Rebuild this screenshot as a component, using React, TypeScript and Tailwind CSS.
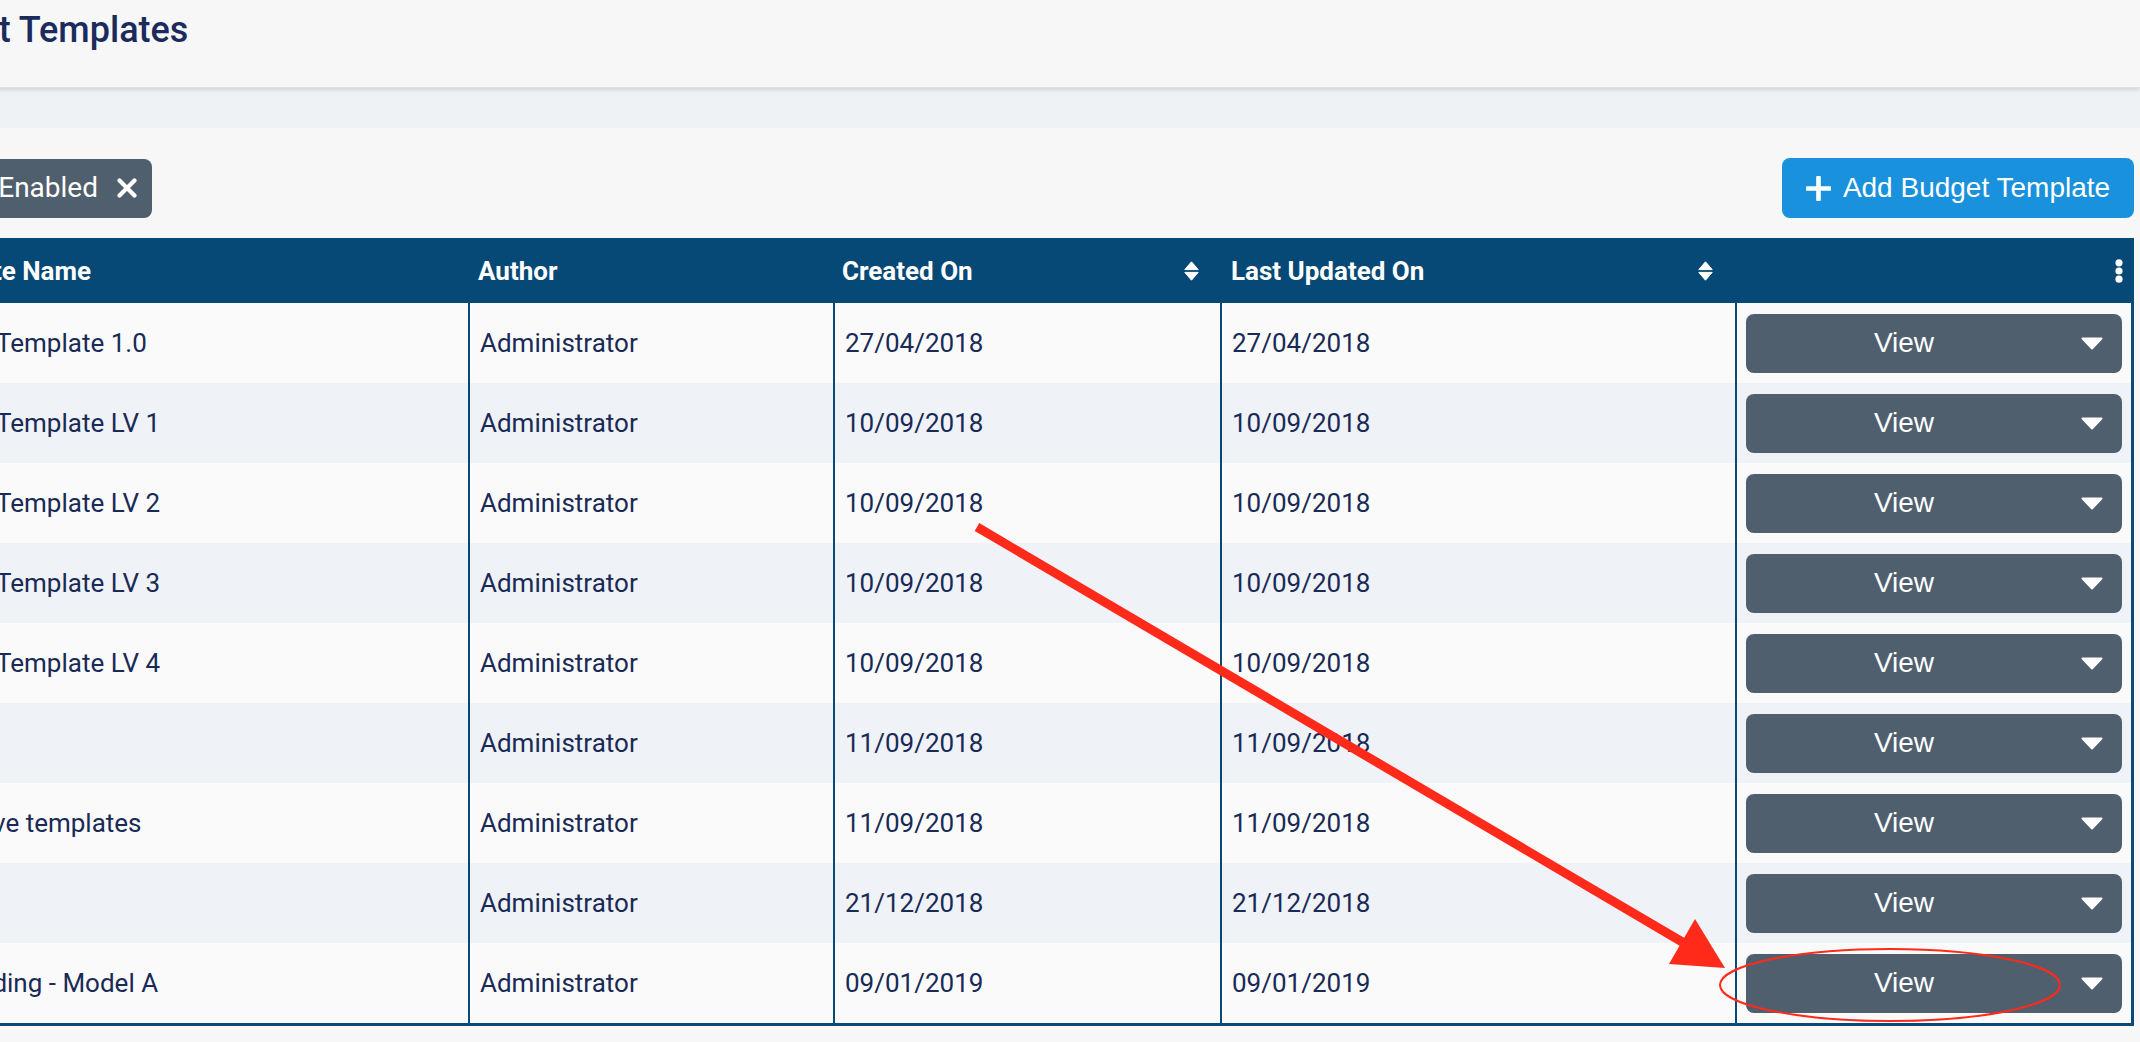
import React from "react";

const rows = [
  { name: "Budget Template 1.0", created: "27/04/2018", updated: "27/04/2018" },
  { name: "Budget Template LV 1", created: "10/09/2018", updated: "10/09/2018" },
  { name: "Budget Template LV 2", created: "10/09/2018", updated: "10/09/2018" },
  { name: "Budget Template LV 3", created: "10/09/2018", updated: "10/09/2018" },
  { name: "Budget Template LV 4", created: "10/09/2018", updated: "10/09/2018" },
  { name: "Test", created: "11/09/2018", updated: "11/09/2018" },
  { name: "Indicative templates", created: "11/09/2018", updated: "11/09/2018" },
  { name: "Demo", created: "21/12/2018", updated: "21/12/2018" },
  { name: "Onboarding - Model A", created: "09/01/2019", updated: "09/01/2019" },
];

function SortIcon() {
  return (
    <svg width="15" height="20" viewBox="0 0 15 20" className="shrink-0">
      <path d="M7.5 0.8 L14.2 8.6 L0.8 8.6 Z" fill="#ffffff" stroke="#ffffff" strokeWidth="1" strokeLinejoin="round" />
      <path d="M0.8 11.4 L14.2 11.4 L7.5 19.2 Z" fill="#ffffff" stroke="#ffffff" strokeWidth="1" strokeLinejoin="round" />
    </svg>
  );
}

function Kebab() {
  return (
    <svg width="8" height="24" viewBox="0 0 8 24">
      <circle cx="4" cy="3.8" r="3.6" fill="#ffffff" />
      <circle cx="4" cy="12" r="3.6" fill="#ffffff" />
      <circle cx="4" cy="20.2" r="3.6" fill="#ffffff" />
    </svg>
  );
}

function Caret() {
  return (
    <svg width="22" height="13" viewBox="0 0 22 13">
      <path d="M1.5 1.5 L20.5 1.5 L11 11.5 Z" fill="#ffffff" stroke="#ffffff" strokeWidth="2" strokeLinejoin="round" />
    </svg>
  );
}

function ViewButton() {
  return (
    <div className="flex h-[59px] w-full items-center rounded-[8px] bg-[#505f6e] text-white">
      <div className="flex-1 text-center text-[28px] leading-none font-['Liberation_Sans',Arial,sans-serif]">View</div>
      <div className="flex w-[60px] items-center justify-center">
        <Caret />
      </div>
    </div>
  );
}

export default function App() {
  return (
    <div className="relative h-[1042px] w-[2140px] overflow-hidden bg-[#f7f7f7] font-['Roboto',sans-serif]">
      <div className="ml-[-99px] w-[2239px]">
        <header className="relative z-10 h-[88px] border-b border-[#e2e2e2] bg-[#f7f7f7] shadow-[0_2px_4px_rgba(0,0,0,0.12)]">
          <h1 className="ml-[-5px] pt-[12px] text-[36px] leading-[36px] font-medium text-[#1b2b5c]">Budget Templates</h1>
        </header>
        <div className="h-[40px] bg-[#eff2f5]" />
        <div className="pr-[6px]">
          <div className="mt-[30px] flex h-[60px] items-center justify-between">
            <div className="flex h-[59px] w-[251px] items-center justify-end gap-[19px] rounded-[8px] bg-[#505f6e] pr-[15px] text-white">
              <span className="whitespace-nowrap text-[28px] leading-none">Status: Enabled</span>
              <svg width="20" height="20" viewBox="0 0 20 20" className="shrink-0">
                <path d="M2.5 2.5 L17.5 17.5 M17.5 2.5 L2.5 17.5" stroke="#ffffff" strokeWidth="4.2" strokeLinecap="round" />
              </svg>
            </div>
            <button className="flex h-[60px] w-[352px] items-center justify-center gap-[12px] rounded-[8px] bg-[#1a91dc] text-white">
              <svg width="25" height="25" viewBox="0 0 25 25" className="shrink-0">
                <path d="M12.5 1.5 L12.5 23.5 M1.5 12.5 L23.5 12.5" stroke="#ffffff" strokeWidth="4.6" strokeLinecap="round" />
              </svg>
              <span className="whitespace-nowrap text-[28px] leading-none font-['Liberation_Sans',Arial,sans-serif]">Add Budget Template</span>
            </button>
          </div>

          <div className="mt-[20px] border-r-[3px] border-b-[3px] border-l-2 border-[#0b4a78]">
            <div className="grid h-[65px] grid-cols-[565px_365px_387px_515px_396px] bg-[#074976] text-[26px] leading-none font-bold text-white">
              <div className="flex items-center pl-[3px] whitespace-nowrap">Template Name</div>
              <div className="flex items-center pl-[10px]">Author</div>
              <div className="flex items-center justify-between pr-[21px] pl-[9px]">
                <span>Created On</span>
                <SortIcon />
              </div>
              <div className="flex items-center justify-between pr-[22px] pl-[11px]">
                <span>Last Updated On</span>
                <SortIcon />
              </div>
              <div className="flex items-center justify-end pr-[8px]">
                <Kebab />
              </div>
            </div>
            {rows.map((r, i) => (
              <div
                key={i}
                className={`grid h-[80px] grid-cols-[565px_365px_387px_515px_396px] text-[26px] leading-none text-[#192a56] ${
                  i % 2 === 0 ? "bg-[#fafafa]" : "bg-[#eff2f7]"
                }`}
              >
                <div className="flex items-center overflow-hidden pl-[5px] whitespace-nowrap">{r.name}</div>
                <div className="flex items-center border-l-2 border-[#0b4a78] pl-[10px]">Administrator</div>
                <div className="flex items-center border-l-2 border-[#0b4a78] pl-[10px]">{r.created}</div>
                <div className="flex items-center border-l-2 border-[#0b4a78] pl-[10px]">{r.updated}</div>
                <div className="flex items-center border-l-2 border-[#0b4a78] px-[9px]">
                  <ViewButton />
                </div>
              </div>
            ))}
          </div>
        </div>
      </div>

      <svg
        className="pointer-events-none absolute top-0 left-0"
        width="2140"
        height="1042"
        viewBox="0 0 2140 1042"
      >
        <line x1="977" y1="527" x2="1684" y2="943" stroke="#ff2a1a" strokeWidth="9" />
        <polygon points="1725,968 1695,919 1669,964" fill="#ff2a1a" />
        <ellipse cx="1890" cy="985" rx="170" ry="36" fill="none" stroke="#ff2a1a" strokeWidth="2" />
      </svg>
    </div>
  );
}
